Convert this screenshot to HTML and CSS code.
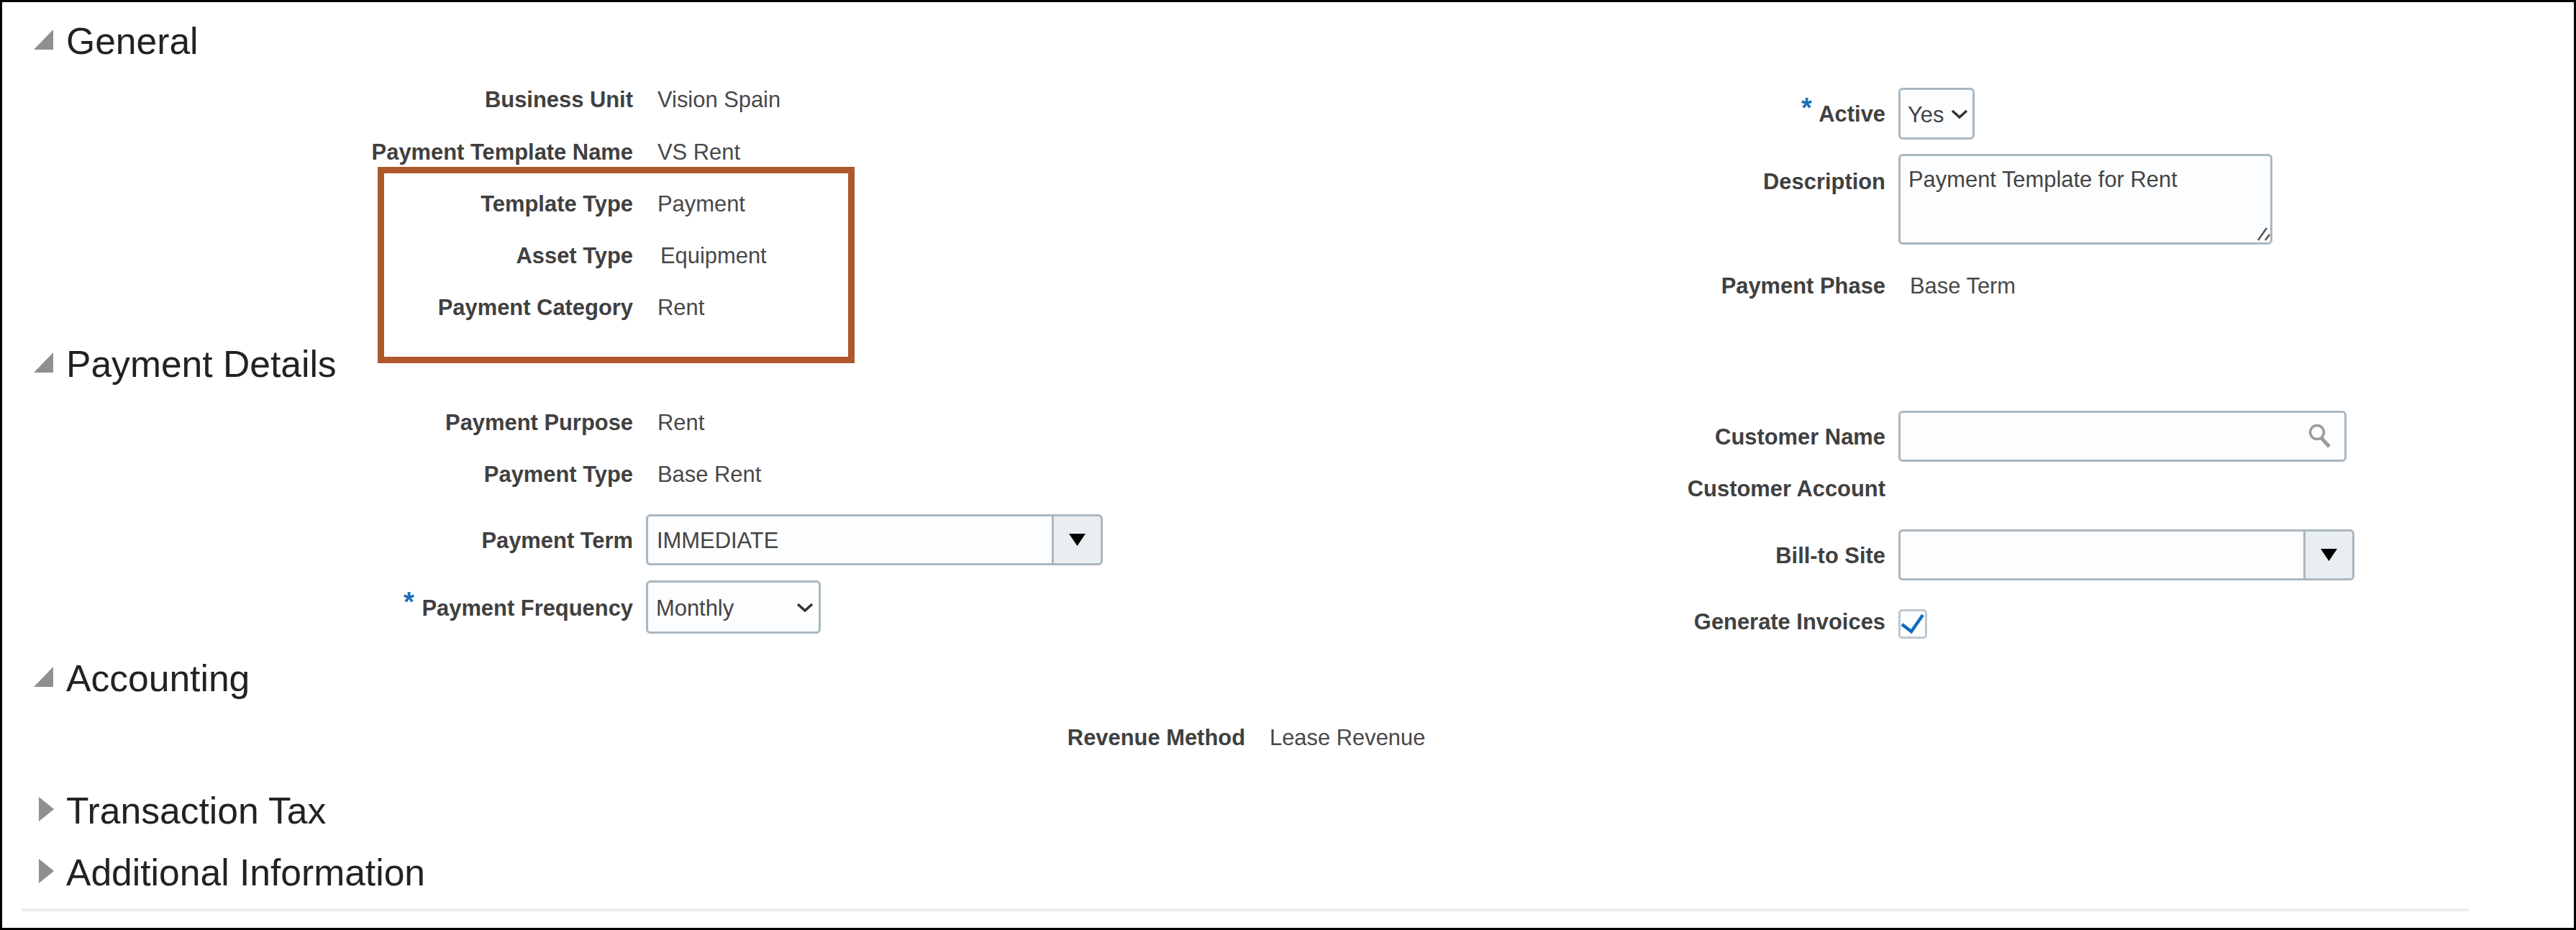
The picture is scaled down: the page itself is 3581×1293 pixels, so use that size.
FILE: index.html
```html
<!DOCTYPE html>
<html lang="en">
<head>
    <meta charset="UTF-8">
    <title>Payment Template</title>
    <link rel="stylesheet" href="styles.css">
</head>
<body>

<main class="frame">

    <section class="section">
        <h2 class="heading">
            <svg class="arrow" viewBox="0 0 29 28"><polygon points="28,0 28,28 1,28"/></svg>
            General
        </h2>
        <div class="form">
            <div class="col col-left">
                <div class="field field-first"><span class="label">Business Unit</span><span class="value">Vision Spain</span></div>
                <div class="field"><span class="label">Payment Template Name</span><span class="value">VS Rent</span></div>
                <div class="field"><span class="label">Template Type</span><span class="value">Payment</span></div>
                <div class="field"><span class="label">Asset Type</span><span class="value value-shift">Equipment</span></div>
                <div class="field"><span class="label">Payment Category</span><span class="value">Rent</span></div>
            </div>
            <div class="col col-right">
                <div class="field field-control">
                    <span class="label"><span class="req">*</span> Active</span>
                    <div class="select-wrap select-active">
                        <select class="select"><option>Yes</option><option>No</option></select>
                        <svg class="chevron" viewBox="0 0 24 13"><polyline points="2,2 12,11 22,2"/></svg>
                    </div>
                </div>
                <div class="field field-control field-top">
                    <span class="label">Description</span>
                    <div class="area-wrap">
                        <textarea class="area">Payment Template for Rent</textarea>
                        <svg class="grip" viewBox="0 0 22 20"><path d="M3 18 L15 1 M13 18 L19 10"/></svg>
                    </div>
                </div>
                <div class="field field-phase"><span class="label">Payment Phase</span><span class="value">Base Term</span></div>
            </div>
        </div>
    </section>

    <section class="section">
        <h2 class="heading">
            <svg class="arrow" viewBox="0 0 29 28"><polygon points="28,0 28,28 1,28"/></svg>
            Payment Details
        </h2>
        <div class="form">
            <div class="col col-left">
                <div class="field"><span class="label">Payment Purpose</span><span class="value">Rent</span></div>
                <div class="field"><span class="label">Payment Type</span><span class="value">Base Rent</span></div>
                <div class="field field-control">
                    <span class="label">Payment Term</span>
                    <div class="combo combo-term">
                        <input class="input" type="text" value="IMMEDIATE">
                        <button class="combo-btn" type="button"><svg class="caret" viewBox="0 0 23 17"><polygon points="0,0 23,0 11.5,17"/></svg></button>
                    </div>
                </div>
                <div class="field field-control field-tall">
                    <span class="label"><span class="req">*</span> Payment Frequency</span>
                    <div class="select-wrap select-freq">
                        <select class="select"><option>Monthly</option></select>
                        <svg class="chevron" viewBox="0 0 24 13"><polyline points="2,2 12,11 22,2"/></svg>
                    </div>
                </div>
            </div>
            <div class="col col-right">
                <div class="field field-control">
                    <span class="label">Customer Name</span>
                    <div class="combo combo-customer">
                        <input class="input" type="text">
                        <svg class="search" viewBox="0 0 32 35"><circle cx="12" cy="13" r="9.5"/><path d="M18 21 L29 33" class="search-handle"/></svg>
                    </div>
                </div>
                <div class="field"><span class="label">Customer Account</span></div>
                <div class="field field-control field-site">
                    <span class="label">Bill-to Site</span>
                    <div class="combo combo-site">
                        <input class="input" type="text">
                        <button class="combo-btn" type="button"><svg class="caret" viewBox="0 0 23 17"><polygon points="0,0 23,0 11.5,17"/></svg></button>
                    </div>
                </div>
                <div class="field field-control">
                    <span class="label">Generate Invoices</span>
                    <span class="check">
                        <svg viewBox="0 0 40 41"><polyline points="5,21 18,31 34,8"/></svg>
                    </span>
                </div>
            </div>
        </div>
    </section>

    <section class="section section-last">
        <h2 class="heading">
            <svg class="arrow" viewBox="0 0 29 28"><polygon points="28,0 28,28 1,28"/></svg>
            Accounting
        </h2>
        <div class="field field-wide"><span class="label">Revenue Method</span><span class="value">Lease Revenue</span></div>
    </section>

    <section class="section-closed">
        <h2 class="heading">
            <svg class="arrow" viewBox="0 0 29 34"><polygon points="8,0 29,17 8,34"/></svg>
            Transaction Tax
        </h2>
    </section>

    <section class="section-closed">
        <h2 class="heading">
            <svg class="arrow" viewBox="0 0 29 34"><polygon points="8,0 29,17 8,34"/></svg>
            Additional Information
        </h2>
    </section>

    <div class="divider"></div>

    <!-- annotation box drawn over the form -->
    <div class="callout"></div>
</main>

</body>
</html>
```

FILE: styles.css
```css
* {
    box-sizing: border-box;
}

body {
    margin: 0;
    background-color: #fff;
    font-family: "Liberation Sans", Arial, sans-serif;
}

.frame {
    position: relative;
    width: 3581px;
    height: 1293px;
    padding-top: 18px;
    border: 3px solid #000;
    background-color: #fff;
    overflow: hidden;
}

.section {
    padding-bottom: 8px;
}

.section-last {
    padding-bottom: 31px;
}

.section-closed {
    margin-bottom: 14px;
}

.heading {
    display: flex;
    align-items: center;
    gap: 17px;
    height: 72px;
    margin: 0;
    padding-left: 43px;
    font-size: 51.6px;
    font-weight: normal;
    color: #222;
}

.arrow {
    width: 29px;
    height: auto;
    margin-top: -5px;
    fill: #8d8f91;
}

.form {
    display: grid;
    grid-template-columns: 1697px 1fr;
    margin-top: 8px;
}

.col-left {
    --label-width: 877px;
}

.col-right {
    --label-width: 921px;
}

.field {
    display: flex;
    align-items: center;
    height: 72px;
    font-size: 30.9px;
}

.field-first {
    margin-bottom: 1px;
}

.field-control {
    height: 71px;
    margin-top: 21px;
}

.field-tall {
    height: 74px;
}

.field-top {
    align-items: flex-start;
    height: 126px;
}

.field-top .label {
    line-height: 72px;
}

.field-phase {
    margin-top: 20px;
}

.field-site {
    margin-top: 22px;
}

.field-wide {
    --label-width: 1728px;
    margin-top: 9px;
}

.label {
    flex-shrink: 0;
    width: var(--label-width);
    padding-top: 3px;
    text-align: right;
    font-weight: bold;
    color: #404040;
}

.value {
    margin-left: 34px;
    padding-top: 3px;
    color: #484848;
}

.value-shift {
    margin-left: 38px;
}

.req {
    position: relative;
    top: -6px;
    margin-right: 2px;
    font-size: 38px;
    line-height: 0;
    color: #1f6fb5;
}

/* inputs */
.select-wrap,
.combo,
.area-wrap {
    position: relative;
    margin-left: 18px;
}

.select,
.input,
.area {
    display: block;
    width: 100%;
    height: 100%;
    margin: 0;
    border: 3px solid #a9b7c0;
    border-radius: 6px;
    outline: none;
    background-color: #fcfdfe;
    font-family: inherit;
    font-size: 30.9px;
    color: #444;
}

.select {
    appearance: none;
    padding: 3px 0 0 11px;
}

.select-active {
    width: 106px;
    height: 72px;
}

.select-active .select {
    padding-left: 10px;
}

.select-active .chevron {
    right: 9px;
}

.select-freq {
    width: 243px;
    height: 74px;
}

.chevron {
    position: absolute;
    top: 50%;
    right: 10px;
    width: 24px;
    margin-top: -6px;
    fill: none;
    stroke: #333;
    stroke-width: 3.5;
    pointer-events: none;
}

.area-wrap {
    width: 520px;
    height: 126px;
}

.area {
    padding: 15px 11px;
    line-height: 36px;
    resize: none;
}

.grip {
    position: absolute;
    right: 1px;
    bottom: 4px;
    width: 22px;
    fill: none;
    stroke: #555;
    stroke-width: 2.5;
}

.combo {
    display: flex;
    height: 71px;
}

.combo-term {
    width: 635px;
}

.combo-customer {
    width: 623px;
}

.combo-site {
    width: 634px;
}

.input {
    flex: 1;
    min-width: 0;
    padding: 3px 12px 0;
}

.combo-term .input,
.combo-site .input {
    border-right: none;
    border-radius: 6px 0 0 6px;
}

.combo-btn {
    display: flex;
    align-items: center;
    justify-content: center;
    width: 71px;
    padding: 0;
    border: 3px solid #a9b7c0;
    border-radius: 0 6px 6px 0;
    background-color: #e9eef1;
}

.caret {
    width: 23px;
    fill: #000;
}

.search {
    position: absolute;
    top: 17px;
    right: 21px;
    width: 32px;
    fill: none;
    stroke: #9b9b9b;
    stroke-width: 3.5;
}

.search-handle {
    stroke-width: 5;
}

.check {
    width: 40px;
    height: 41px;
    margin: 7px 0 0 18px;
    border: 3px solid #bcc8d0;
    border-radius: 5px;
    background-color: #fcfdfe;
}

.check svg {
    display: block;
    width: 40px;
    height: 41px;
    margin: -3px;
    fill: none;
    stroke: #0f6cbd;
    stroke-width: 4.5;
}

.divider {
    width: 3402px;
    height: 4px;
    margin: 3px 0 0 27px;
    background-color: #e8edf1;
}

.callout {
    position: absolute;
    left: 522px;
    top: 229px;
    width: 663px;
    height: 273px;
    border: 9px solid #ae592d;
}
```
